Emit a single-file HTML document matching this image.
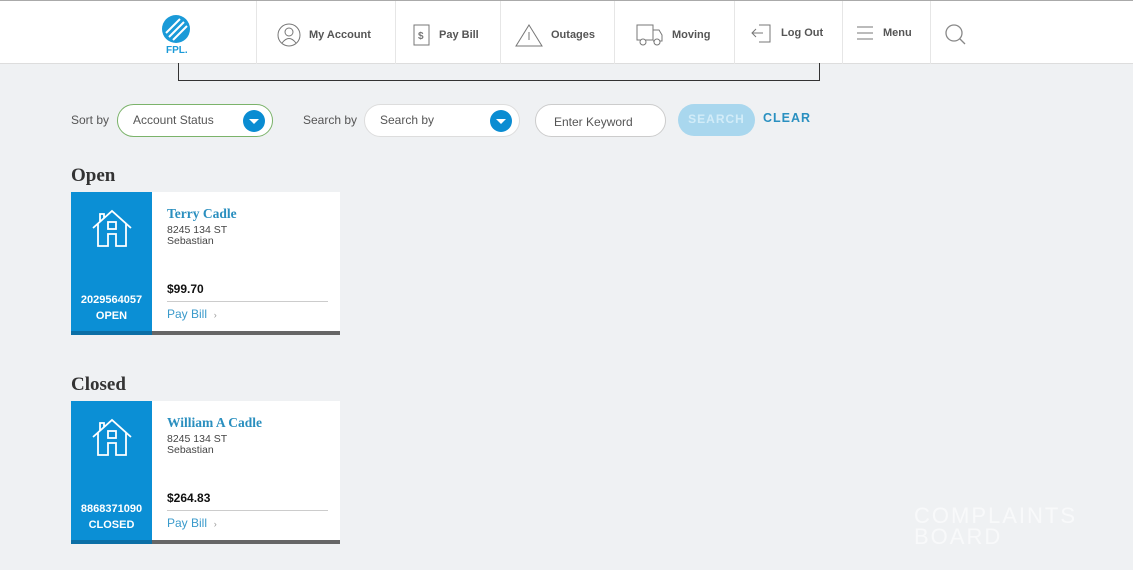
<!DOCTYPE html>
<html><head><style>
*{margin:0;padding:0;box-sizing:border-box}
body{width:1133px;height:570px;background:#eff1f3;font-family:"Liberation Sans",sans-serif;position:relative;overflow:hidden}
.hdr{position:absolute;left:0;top:0;width:1133px;height:64px;background:#fff;border-top:1px solid #aaa;border-bottom:1px solid #ddd}
.sep{position:absolute;top:0;height:63px;width:1px;background:#e6e6e6}
.nav{position:absolute;top:2px;height:63px;display:flex;align-items:center;font-size:11px;font-weight:bold;color:#555}
.nav svg{margin-right:8px}
.box{position:absolute;left:178px;top:63px;width:642px;height:18px;border:1.5px solid #333;border-top:none}
.lbl{position:absolute;font-size:12px;color:#555}
.sel{position:absolute;height:33px;border-radius:17px;background:#fff;font-size:12px;color:#555;padding-left:15px;line-height:31px}
.dd{position:absolute;right:7px;top:5px;width:22px;height:22px;border-radius:50%;background:#0a8cd2}
.dd:after{content:"";position:absolute;left:6px;top:9px;border-left:5px solid transparent;border-right:5px solid transparent;border-top:5px solid #fff}
h2{position:absolute;font-family:"Liberation Serif",serif;font-size:19px;color:#333;font-weight:bold}
.card{position:absolute;left:71px;width:269px;height:143px;background:#fff;border-bottom:4px solid #666}
.blue{position:absolute;left:0;top:0;width:81px;height:143px;background:#0b8fd5;border-bottom:4px solid #0b6fa6;color:#fff;text-align:center;font-size:11px;font-weight:bold}
.nm{position:absolute;left:96px;top:14px;font-family:"Liberation Serif",serif;font-weight:bold;font-size:13.5px;color:#2a8fbf}
.ad{position:absolute;left:96px;top:33px;font-size:10.5px;color:#444;line-height:11px}
.amt{position:absolute;left:96px;top:90px;font-size:12px;font-weight:bold;color:#111}
.ln{position:absolute;left:96px;top:109px;width:161px;height:1px;background:#ccc}
.pb{position:absolute;left:96px;top:115px;font-size:12px;color:#3a9acb}
</style></head><body>
<div class="hdr">
<svg style="position:absolute;left:160px;top:12px" width="48" height="44"><circle cx="16" cy="16" r="14" fill="#1a9ad8"/><path d="M6 20 L20 6 M9 24 L24 9 M13 27 L27 13" stroke="#fff" stroke-width="2"/><text x="6" y="40" font-size="10" font-weight="bold" fill="#1a9ad8" font-family="Liberation Sans">FPL.</text></svg>
<div class="sep" style="left:256px"></div><div class="sep" style="left:395px"></div><div class="sep" style="left:500px"></div><div class="sep" style="left:614px"></div><div class="sep" style="left:734px"></div><div class="sep" style="left:842px"></div><div class="sep" style="left:930px"></div>
<div class="nav" style="left:277px"><svg width="24" height="24"><circle cx="12" cy="12" r="11" fill="none" stroke="#777"/><circle cx="12" cy="9" r="4" fill="none" stroke="#777"/><path d="M5 20 Q12 11 19 20" fill="none" stroke="#777"/></svg>My Account</div>
<div class="nav" style="left:413px"><svg width="18" height="24"><rect x="1" y="2" width="15" height="20" fill="none" stroke="#777"/><text x="5" y="16" font-size="10" fill="#777">$</text></svg>Pay Bill</div>
<div class="nav" style="left:515px"><svg width="28" height="24"><path d="M14 2 L27 23 L1 23 Z" fill="none" stroke="#777"/><path d="M14 9 V17" stroke="#777"/></svg>Outages</div>
<div class="nav" style="left:636px"><svg width="28" height="24"><rect x="1" y="2" width="16" height="15" fill="none" stroke="#777"/><path d="M17 7 H23 L26 12 V18 H17" fill="none" stroke="#777"/><circle cx="7" cy="19" r="3" fill="#fff" stroke="#777"/><circle cx="21" cy="19" r="3" fill="#fff" stroke="#777"/></svg>Moving</div>
<div class="nav" style="left:751px;top:0"><svg width="22" height="24"><path d="M8 4 H19 V21 H8 M1 12 H12 M5 8 L1 12 L5 16" fill="none" stroke="#777"/></svg>Log Out</div>
<div class="nav" style="left:857px;top:0"><svg width="18" height="24"><path d="M0 6H16M0 12H16M0 18H16" stroke="#777"/></svg>Menu</div>
<svg style="position:absolute;left:944px;top:22px" width="24" height="24"><circle cx="10" cy="10" r="8" fill="none" stroke="#888" stroke-width="1.3"/><path d="M16 16 L21 21" stroke="#888" stroke-width="1.3"/></svg>
</div>
<div class="box"></div>
<div class="lbl" style="left:71px;top:113px">Sort by</div>
<div class="sel" style="left:117px;top:104px;width:156px;border:1px solid #7bb36a">Account Status<div class="dd"></div></div>
<div class="lbl" style="left:303px;top:113px">Search by</div>
<div class="sel" style="left:364px;top:104px;width:156px;border:1px solid #ddd">Search by<div class="dd"></div></div>
<div class="sel" style="left:535px;top:104px;width:131px;border:1px solid #ccc;padding-left:18px;line-height:34px">Enter Keyword</div>
<div style="position:absolute;left:678px;top:104px;width:77px;height:32px;border-radius:16px;background:#a9d7ee;color:#d2ecf8;font-size:12px;font-weight:bold;text-align:center;line-height:30px;letter-spacing:1px">SEARCH</div>
<div style="position:absolute;left:763px;top:111px;color:#2a90c0;font-size:12.5px;font-weight:bold;letter-spacing:1px">CLEAR</div>
<h2 style="left:71px;top:165px">Open</h2>
<div class="card" style="top:192px"><div class="blue">
<svg style="margin-top:16px" width="44" height="42"><path d="M3 20 L22 3 L41 20 M8 16 V38 H18 V26 H26 V38 H36 V16 M10 14 V6 H14 V10" fill="none" stroke="#fff" stroke-width="1.8"/><rect x="18" y="14" width="8" height="7" fill="none" stroke="#fff" stroke-width="1.8"/></svg>
<div style="position:absolute;top:102px;width:81px">2029564057</div><div style="position:absolute;top:118px;width:81px">OPEN</div></div>
<div class="nm">Terry Cadle</div><div class="ad">8245 134 ST<br>Sebastian</div><div class="amt">$99.70</div><div class="ln"></div><div class="pb">Pay Bill &nbsp;<span style="font-size:9px;color:#999">›</span></div></div>
<h2 style="left:71px;top:374px">Closed</h2>
<div class="card" style="top:401px"><div class="blue">
<svg style="margin-top:16px" width="44" height="42"><path d="M3 20 L22 3 L41 20 M8 16 V38 H18 V26 H26 V38 H36 V16 M10 14 V6 H14 V10" fill="none" stroke="#fff" stroke-width="1.8"/><rect x="18" y="14" width="8" height="7" fill="none" stroke="#fff" stroke-width="1.8"/></svg>
<div style="position:absolute;top:102px;width:81px">8868371090</div><div style="position:absolute;top:118px;width:81px">CLOSED</div></div>
<div class="nm">William A Cadle</div><div class="ad">8245 134 ST<br>Sebastian</div><div class="amt">$264.83</div><div class="ln"></div><div class="pb">Pay Bill &nbsp;<span style="font-size:9px;color:#999">›</span></div></div>
<div style="position:absolute;left:914px;top:505px;color:#fff;opacity:.6;font-size:22px;letter-spacing:2px;line-height:21px">COMPLAINTS<br>BOARD</div>
</body></html>
